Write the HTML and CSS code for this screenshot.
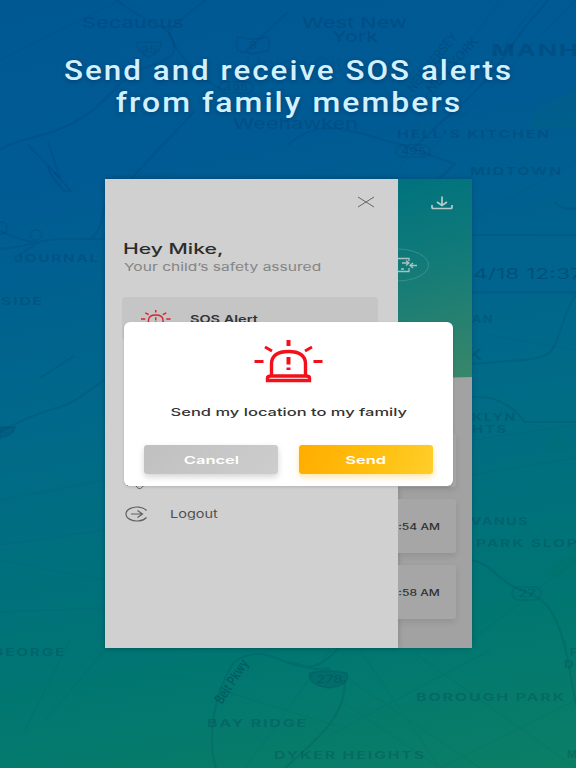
FILE: index.html
```
<!DOCTYPE html>
<html lang="en">
<head>
<meta charset="utf-8">
<title>SOS Alerts</title>
<link rel="stylesheet" href="styles.css">
</head>
<body>

<svg class="map" viewBox="0 0 576 768" aria-hidden="true">
    <!-- parks -->
    <g class="parks">
        <path d="M536 110L576 90V128H528Z"/>
        <path d="M548 437h21v13h-21z"/>
        <path d="M542 572L576 548V580L556 578Z"/>
    </g>
    <!-- streets -->
    <g class="streets">
        <path d="M472 440L576 425M472 475L576 458M490 335L576 350M472 640L576 560M440 768L576 700M340 700L440 768M360 650L440 768M330 735L490 650M350 680L480 768M410 650L576 768M245 768L330 650M220 690L350 730M0 500L105 480M0 560L105 580M0 545L105 530M0 612L105 608M25 730L70 640M45 720L105 650"/>
        <path d="M576 0L420 160M540 0L460 100M120 0L0 60M400 170L440 60M580 160L470 220M500 0L430 100"/>
    </g>
    <!-- roads -->
    <g class="roads">
        <path d="M116 0C145 22 160 24 168 31C185 16 195 8 206 0M168 31C190 65 150 60 131 75C110 90 98 115 57 130C35 139 16 139 0 150"/>
        <path d="M168 31C176 55 206 85 225 90M288 12L245 52M60 178L48 142M28 145L60 178M195 111L156 152L132 178"/>
        <path d="M548 0C530 22 518 34 511 47C482 90 460 105 434 129L415 147M288 145C325 110 370 140 400 144L455 164L438 180"/>
        <path d="M0 249C30 247 40 238 70 239H105M0 231C15 237 22 241 38 243L14 258M92 237C102 230 102 215 105 205"/>
        <path d="M0 432C18 422 40 412 60 407C78 402 90 388 105 380M40 378L74 356M48 166C50 178 62 187 64 191H71L54 172"/>
        <path d="M472 397C500 395 515 410 525 422H576M472 364C510 360 545 362 552 350C563 330 564 310 576 295M555 202C563 212 570 207 576 209"/>
        <path d="M472 560C495 565 498 583 526 592C555 602 560 628 568 660M564 640L576 705"/>
        <path d="M216 768C206 735 216 690 232 665C240 654 260 652 270 656C300 666 315 680 345 640M330 668C312 672 300 664 290 662M345 680C345 720 315 740 285 768"/>
    </g>
    <!-- shields -->
    <g class="shields">
        <path d="M238 37q16 4 30 0q3 6 0 14q-12 2-15 3q-3-1-15-3q-3-8 0-14z"/>
        <path d="M137 42h24q1 10-12 15q-13-5-12-15z"/>
        <rect x="219" y="82" width="34" height="11" rx="5.5"/>
        <rect x="396" y="145" width="34" height="12" rx="6"/>
        <rect x="512" y="587" width="29" height="13" rx="6.5"/>
        <path class="solid" d="M310 673q18-5 37 0q4 12-18 15q-22-3-19-15z"/>
        <ellipse cx="36" cy="235" rx="6" ry="5"/>
        <ellipse cx="2" cy="228" rx="5" ry="6"/>
        <path class="solid" d="M0 427h15q-1 8-15 11z"/>
    </g>
    <!-- date bar -->
    <rect class="datebar-shadow" x="470" y="285" width="110" height="9"/>
    <rect class="datebar" x="472" y="235" width="104" height="56"/>
    <path class="datebar-line" d="M472 235H576"/>
    <!-- place names -->
    <g class="places">
        <text x="82" y="28" font-size="15" textLength="102" lengthAdjust="spacingAndGlyphs">Secaucus</text>
        <text x="302" y="28" font-size="15" textLength="105" lengthAdjust="spacingAndGlyphs">West New</text>
        <text x="332" y="42" font-size="15" textLength="46" lengthAdjust="spacingAndGlyphs">York</text>
        <text class="faint" x="245" y="71" font-size="19" textLength="112" lengthAdjust="spacingAndGlyphs">Union City</text>
        <text x="233" y="129" font-size="15" textLength="125" lengthAdjust="spacingAndGlyphs">Weehawken</text>
        <text x="0" y="0" transform="translate(413 93) rotate(-51)" font-size="13" textLength="72" lengthAdjust="spacingAndGlyphs">NEW JERSEY</text>
        <text x="0" y="0" transform="translate(432 94) rotate(-48)" font-size="13" textLength="70" lengthAdjust="spacingAndGlyphs">NEW YORK</text>
        <text x="249" y="49" font-size="10" textLength="8" lengthAdjust="spacingAndGlyphs">9</text>
        <text x="141" y="53" font-size="9" textLength="16" lengthAdjust="spacingAndGlyphs">95</text>
        <text x="224" y="91" font-size="9" textLength="24" lengthAdjust="spacingAndGlyphs">495</text>
        <text x="401" y="155" font-size="10" textLength="25" lengthAdjust="spacingAndGlyphs">495</text>
        <text x="518" y="597" font-size="10" textLength="18" lengthAdjust="spacingAndGlyphs">27</text>
        <text x="316" y="683" font-size="10" textLength="27" lengthAdjust="spacingAndGlyphs">278</text>
    </g>
    <g class="places bold">
        <text x="491" y="56" font-size="16" textLength="110" lengthAdjust="spacingAndGlyphs">MANHA</text>
        <text x="397" y="138" font-size="10.5" textLength="154" lengthAdjust="spacingAndGlyphs">HELL'S KITCHEN</text>
        <text x="470" y="175" font-size="10.5" textLength="93" lengthAdjust="spacingAndGlyphs">MIDTOWN</text>
        <text x="14" y="262" font-size="10.5" textLength="86" lengthAdjust="spacingAndGlyphs">JOURNAL</text>
        <text x="1" y="305" font-size="10.5" textLength="43" lengthAdjust="spacingAndGlyphs">SIDE</text>
        <text x="-8" y="656" font-size="10.5" textLength="74" lengthAdjust="spacingAndGlyphs">GEORGE</text>
        <text x="472" y="323" font-size="10.5" textLength="22" lengthAdjust="spacingAndGlyphs">AN</text>
        <text x="468" y="360" font-size="15" textLength="16" lengthAdjust="spacingAndGlyphs">K</text>
        <text x="472" y="421" font-size="10.5" textLength="45" lengthAdjust="spacingAndGlyphs">KLYN</text>
        <text x="472" y="433" font-size="10.5" textLength="36" lengthAdjust="spacingAndGlyphs">HTS</text>
        <text x="471" y="525" font-size="10.5" textLength="58" lengthAdjust="spacingAndGlyphs">VANUS</text>
        <text x="476" y="547" font-size="10.5" textLength="114" lengthAdjust="spacingAndGlyphs">PARK SLOPE</text>
        <text x="207" y="727" font-size="10.5" textLength="101" lengthAdjust="spacingAndGlyphs">BAY RIDGE</text>
        <text x="274" y="759" font-size="10.5" textLength="152" lengthAdjust="spacingAndGlyphs">DYKER HEIGHTS</text>
        <text x="416" y="701" font-size="10.5" textLength="150" lengthAdjust="spacingAndGlyphs">BOROUGH PARK</text>
        <text x="570" y="656" font-size="10">F</text>
        <text x="564" y="668" font-size="10.5" textLength="11" lengthAdjust="spacingAndGlyphs">D</text>
        <text x="567" y="758" font-size="10.5">M</text>
    </g>
    <text class="road-name" x="0" y="0" transform="translate(222 705) rotate(-57)" font-size="14" textLength="50" lengthAdjust="spacingAndGlyphs">Belt Pkwy</text>
    <text class="date" x="473" y="279" font-size="14" textLength="110" lengthAdjust="spacingAndGlyphs">4/18 12:37</text>
</svg>

<div class="page">
    <h1 class="headline">
        <span class="line1">Send and receive SOS alerts</span><br>
        <span class="line2">from family members</span>
    </h1>

    <div class="phone">
        <div class="drawer">
            <svg class="close" viewBox="0 0 18 12"><path d="M1 1L17 11M17 1L1 11"/></svg>
            <h2 class="hello"><span>Hey Mike,</span></h2>
            <p class="sub"><span>Your child’s safety assured</span></p>
            <div class="item active">
                <svg class="siren" viewBox="0 0 70 44">
                    <path d="M17.5 37V25Q17.5 12.5 34.5 12.5T51.5 25V37M13.5 42V39Q13.5 37 17 37H52Q55.5 37 55.5 39V42Z"/>
                    <path d="M34.5 1V7M10 7.5L18 12M59 7.5L51 12M0 22H10M59 22H69M34.5 18V25M34.5 28V31"/>
                </svg>
                <span class="label">SOS Alert</span>
            </div>
            <div class="item hidden-item">
                <svg class="tool" viewBox="0 0 24 18"><path d="M1 12L3 14M11 14Q14 18.5 17 15.5L19 13"/></svg>
            </div>
            <div class="item logout">
                <svg class="exit" viewBox="0 0 24 16"><path d="M22.5 4.5A11 7 0 1 0 22.5 11.5M7 8H18M13.5 4.5L18.5 8L13.5 11.5"/></svg>
                <span class="label">Logout</span>
            </div>
        </div>

        <div class="app">
            <div class="app-header">
                <svg class="download" viewBox="0 0 22 14"><path d="M11 .5V9M6 6L11 9.5L16 6M1 9V11.5Q1 12.5 3 12.5H19Q21 12.5 21 11.5V9"/></svg>
                <svg class="device" viewBox="0 0 32 34">
                    <ellipse cx="-1" cy="17" rx="31.5" ry="16"/>
                    <path d="M0 10.5H11V13M0 23.5H11V20M4 15H11M8 12.5L11 15L8 17.5M19 17.5H12M15 15L12 17.5L15 20M3 21H6"/>
                </svg>
            </div>
            <div class="card first"></div>
            <div class="card"><span>4:54 AM</span></div>
            <div class="card"><span>4:58 AM</span></div>
        </div>

        <div class="modal">
            <svg class="siren" viewBox="0 0 70 44">
                <path d="M17.5 37V25Q17.5 12.5 34.5 12.5T51.5 25V37M13.5 41.5V39Q13.5 37 17 37H52Q55.5 37 55.5 39V41.5Z"/>
                <path class="rays" d="M11 8L18 12M58 8L51 12M0.500 22.500H9.500M59.500 22.500H68.500"/>
                <path class="mark" d="M34.500 1V7M34.500 18V25.500M34.500 28.500V31"/>
            </svg>
            <p class="question"><span>Send my location to my family</span></p>
            <div class="buttons">
                <button class="cancel"><span>Cancel</span></button>
                <button class="send"><span>Send</span></button>
            </div>
        </div>
    </div>
</div>

</body>
</html>
```
FILE: styles.css
```
body {
    margin: 0;
    width: 576px;
    height: 768px;
    overflow: hidden;
    position: relative;
    font-family: Inter, "Liberation Sans", sans-serif;
    background: linear-gradient(170deg, #005893 0%, #005b94 22%, #00698a 50%, #007672 80%, #0b7f65 100%);
}

h1, h2, p {
    margin: 0;
}

svg {
    display: block;
    fill: none;
}

/* Map behind everything */
.map {
    position: absolute;
    top: 0;
    left: 0;
    width: 576px;
    height: 768px;
}

.parks { fill: rgba(0, 115, 90, 0.12); }
.streets { stroke: rgba(0, 50, 80, 0.04); stroke-width: 1.5; }
.roads { stroke: rgba(0, 45, 80, 0.12); stroke-width: 2; }
.shields { stroke: rgba(0, 45, 80, 0.15); stroke-width: 1.5; }
.shields .solid { fill: rgba(0, 45, 80, 0.15); }

.places {
    fill: rgba(0, 35, 75, 0.19);
    font-weight: 500;
}

.places.bold {
    fill: rgba(0, 35, 70, 0.2);
    font-weight: 700;
    letter-spacing: 1.2px;
}

.places .faint { fill: rgba(0, 35, 75, 0.08); }
.road-name { fill: rgba(0, 35, 70, 0.32); font-weight: 600; }

.datebar { fill: #00648f; }
.datebar-line { stroke: rgba(0, 40, 80, 0.25); }
.datebar-shadow { fill: rgba(0, 40, 70, 0.1); }
.date { fill: rgba(0, 35, 70, 0.3); font-weight: 400; }

.page {
    position: relative;
    display: flex;
    flex-direction: column;
    align-items: center;
}

.headline {
    height: 124px;
    padding-top: 55px;
    font-family: Roboto, sans-serif;
    font-weight: 500;
    font-size: 28px;
    line-height: 32px;
    letter-spacing: 1.8px;
    text-align: center;
    white-space: nowrap;
    color: #d2f1ff;
    text-shadow: 0 1px 4px rgba(0, 30, 70, 0.45);
}

.headline span,
.phone span {
    display: inline-block;
    white-space: nowrap;
}

.headline .line1 { transform: translateX(1px) scaleX(1.12); }
.headline .line2 { transform: translateX(1px) scaleX(1.14); }

/* Phone screen, everything in it is wider than tall */
.phone {
    position: relative;
    display: flex;
    width: 367px;
    height: 469px;
    margin-left: 1px;
    background: #a2a2a2;
    box-shadow: 0 0 5px rgba(0, 40, 70, 0.3);
}

.drawer {
    box-sizing: border-box;
    width: 293px;
    padding: 17px 20px 0 17px;
    background: #d0d0d0;
    box-shadow: 1px 0 5px rgba(0, 0, 0, 0.15);
}

.close {
    width: 18px;
    height: 12px;
    margin-left: auto;
    margin-right: 3px;
    stroke: #666;
}

.hello {
    margin: 31px 0 0 1px;
    font-size: 14.7px;
    line-height: 20px;
    font-weight: 500;
    color: #2c2c2c;
}

.sub {
    margin-left: 2px;
    font-size: 11px;
    line-height: 16px;
    color: #858585;
}

.hello span {
    transform: scaleX(1.44);
    transform-origin: left;
}

.sub span {
    transform: scaleX(1.415);
    transform-origin: left;
}

.label {
    transform: scaleX(1.32);
    transform-origin: left;
}

.item {
    display: flex;
    align-items: center;
    font-size: 11px;
    color: #505050;
}

.item.active {
    width: 256px;
    height: 43px;
    margin-top: 22px;
    border-radius: 4px;
    background: #c5c5c5;
    font-weight: 600;
    color: #333;
}

.siren {
    stroke: #f1111b;
    stroke-width: 3.4;
}

.rays { stroke-width: 3; }
.mark { stroke-width: 4; }

.item .siren {
    width: 30px;
    height: 20px;
    margin: 0 19px 0 19px;
    stroke: #d9232f;
}

.hidden-item {
    height: 18px;
    margin-top: 132px;
}

.tool {
    width: 24px;
    height: 18px;
    margin-left: 3px;
    stroke: #666;
}

.logout {
    height: 20px;
    margin-top: 14px;
}

.exit {
    width: 24px;
    height: 16px;
    margin: 0 22px 0 2px;
    stroke: #606060;
    stroke-width: 1.2;
}

.app {
    width: 74px;
    overflow: hidden;
}

.app-header {
    height: 200px;
    padding-top: 17px;
    box-sizing: border-box;
    background: linear-gradient(165deg, #00727e 0%, #117a79 40%, #398769 100%);
    clip-path: polygon(0 0, 100% 0, 100% 99%, 0 100%);
}

.download {
    width: 22px;
    height: 14px;
    margin-left: 33px;
    stroke: #b5cccc;
    stroke-width: 1.7;
}

.device {
    width: 32px;
    height: 34px;
    margin-top: 38px;
    stroke: #a5c4c1;
    stroke-width: 1.3;
}

.device ellipse {
    stroke: #459391;
    stroke-width: 0.8;
}

.card {
    display: flex;
    align-items: center;
    justify-content: flex-end;
    box-sizing: border-box;
    width: 58px;
    height: 54px;
    margin-top: 12px;
    padding: 2px 16px 0 0;
    border-radius: 0 3px 3px 0;
    background: #a6a6a6;
    box-shadow: 0 3px 7px rgba(0, 0, 0, 0.1);
    font-size: 8.5px;
    font-weight: 500;
    color: #303030;
}

.card.first { margin-top: 54px; }

.card span {
    transform: scaleX(1.42);
    transform-origin: right;
}

/* Confirm dialog over the screen */
.modal {
    position: absolute;
    top: 143px;
    left: 19px;
    box-sizing: border-box;
    width: 329px;
    height: 164px;
    padding: 17px 20px 0;
    border-radius: 6px;
    background: #fff;
    box-shadow: 0 1px 3px rgba(0, 0, 0, 0.15);
}

.modal .siren {
    width: 70px;
    height: 44px;
    margin: 0 auto;
}

.question {
    margin-top: 21px;
    font-size: 11px;
    line-height: 16px;
    font-weight: 500;
    text-align: center;
    color: #333;
}

.question span,
.buttons span {
    transform: scaleX(1.5);
}

.buttons {
    display: flex;
    justify-content: space-between;
    margin-top: 25px;
}

.buttons button {
    width: 134px;
    height: 29px;
    padding: 0;
    border: none;
    border-radius: 3px;
    font-family: inherit;
    font-size: 11px;
    font-weight: 600;
    color: #fff;
}

.cancel {
    background: linear-gradient(135deg, #c0c0c0, #cdcdcd);
    box-shadow: 0 3px 6px rgba(0, 0, 0, 0.17);
}

.send {
    background: linear-gradient(110deg, #ffad00, #ffbd0c 50%, #ffce2b);
    box-shadow: 0 3px 6px rgba(255, 180, 0, 0.35);
}
```
